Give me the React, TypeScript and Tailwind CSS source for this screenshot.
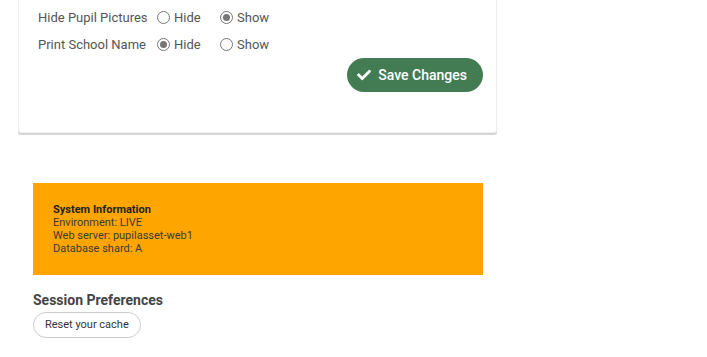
import { FaCheck } from 'react-icons/fa'

const Radio = ({ checked, label }: { checked: boolean; label: string }) => (
    <label className="flex items-center w-[63px] gap-[4px]">
        <span className="w-[13px] h-[13px] rounded-full border border-[#767676] bg-white flex items-center justify-center">
            {checked && <span className="w-[7px] h-[7px] rounded-full bg-[#767676]"></span>}
        </span>
        <span>{label}</span>
    </label>
)

const SettingRow = ({ label, hide }: { label: string; hide: boolean }) => (
    <div className="flex items-center h-[27px]">
        <div className="w-[119px]">{label}</div>
        <Radio checked={hide} label="Hide" />
        <Radio checked={!hide} label="Show" />
    </div>
)

export default function App() {
    return (
        <div className="min-h-screen bg-white font-['Roboto',sans-serif] text-[#555] text-[13px]">
            <div className="ml-[18px] w-[479px] -mt-[10px] pt-[13px] pb-[40px] pl-[19px] pr-[13px] bg-white border border-[#eee] rounded-[3px] shadow-[0_2px_0_#d6d6d6]">
                <SettingRow label="Hide Pupil Pictures" hide={false} />
                <SettingRow label="Print School Name" hide={true} />
                <div className="flex justify-end">
                    <button className="flex items-center gap-[7px] h-[34px] pl-[10px] pr-[16px] rounded-full bg-[#437c53] text-white text-[14px] font-medium">
                        <FaCheck size={14} />
                        Save Changes
                    </button>
                </div>
            </div>

            <div className="ml-[33px] mt-[50px] w-[450px] h-[92px] bg-[#ffa500] px-[20px] pt-[20px] text-[11px] leading-[13px] text-[#3a3a3a]">
                <div className="font-bold text-[#222]">System Information</div>
                <div>Environment: LIVE</div>
                <div>Web server: pupilasset-web1</div>
                <div>Database shard: A</div>
            </div>

            <div className="ml-[33px] mt-[16px]">
                <div className="text-[14px] font-bold text-[#444] leading-[18px]">Session Preferences</div>
                <button className="mt-[3px] h-[26px] px-[11px] rounded-full border border-[#ccc] text-[11px] text-[#333] bg-white">
                    Reset your cache
                </button>
            </div>
        </div>
    )
}
